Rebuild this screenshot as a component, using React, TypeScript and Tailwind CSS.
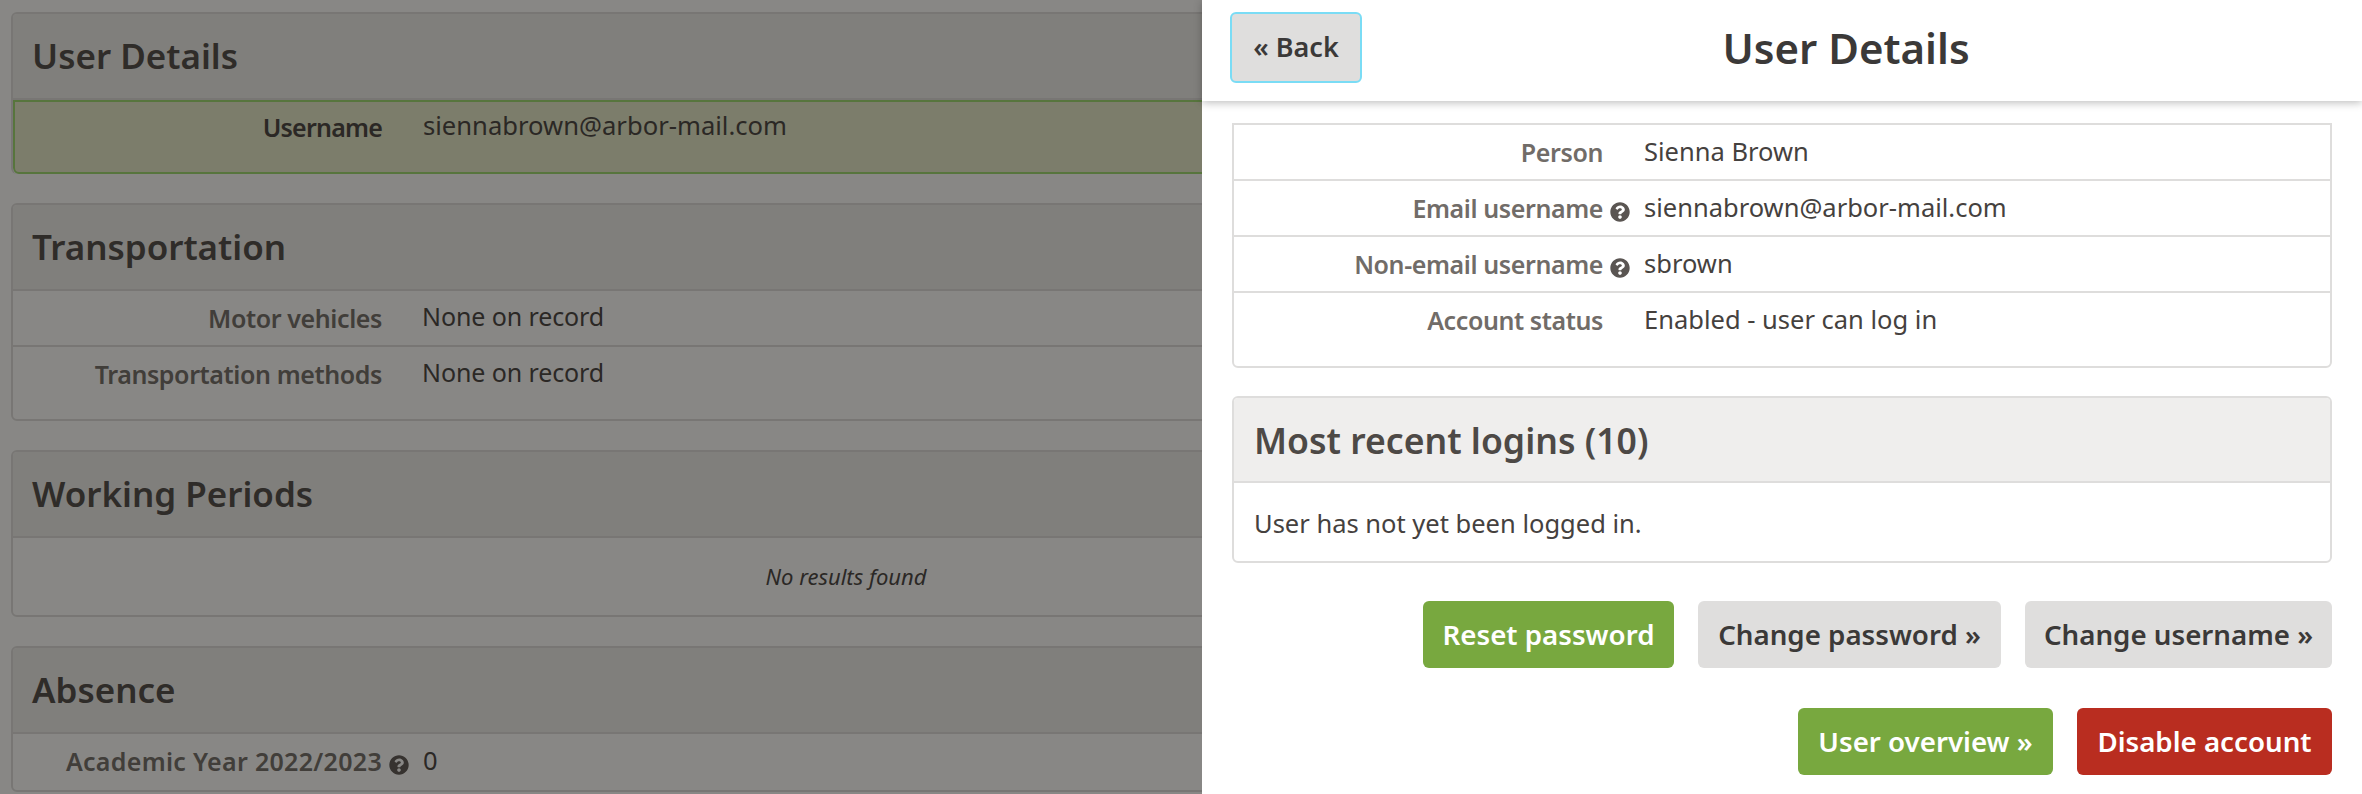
import { FaQuestionCircle } from "react-icons/fa";

const font = "font-['Noto_Sans',sans-serif]";

function Section({ title, children, className = "" }: { title: string; children: React.ReactNode; className?: string }) {
    return (
        <section className={"mb-[29px] overflow-hidden rounded-md border-2 border-[#dedddc] bg-white " + className}>
            <h2 className="flex h-[86px] items-center border-b-2 border-[#dedddc] bg-[#efeeed] px-[19px] text-[35px] font-semibold text-[#4d4946]">
                {title}
            </h2>
            {children}
        </section>
    );
}

function Row({
    label,
    value,
    hint,
    labelClass = "tracking-[-0.4px]",
    valueClass = "text-[25.5px]",
}: {
    label: string;
    value: string;
    hint?: boolean;
    labelClass?: string;
    valueClass?: string;
}) {
    return (
        <div className="flex h-[56px] border-b-2 border-[#dedddc] pt-[9px] text-[25px] last:border-b-0">
            <div className={"flex w-[369px] shrink-0 justify-end font-semibold text-[#716c68] " + labelClass}>
                <span>{label}</span>
                {hint && <FaQuestionCircle className="mt-[12px] ml-[7px] mr-[-27px] h-5 w-5 text-[#5a5552]" />}
            </div>
            <div className={"mt-[-2px] pl-[41px] text-[#45413e] " + valueClass}>{value}</div>
        </div>
    );
}

function Btn({ text, className }: { text: string; className: string }) {
    return (
        <button className={"flex h-[67px] items-center justify-center rounded-md text-[27.7px] font-semibold " + className}>
            {text}
        </button>
    );
}

export default function App() {
    return (
        <div className={"relative h-screen overflow-hidden bg-white " + font}>
            <div className="w-[1692px] px-[11px] pt-3">
                <Section title="User Details" className="border-b-0">
                    <div className="h-[74px] rounded-b-md border-2 border-[#9cda6e] bg-[#e6eaca]">
                        <div className="flex pt-[7px] text-[25px]">
                            <div className="w-[367px] shrink-0 text-right font-semibold tracking-[-0.8px] text-[#45413e]">Username</div>
                            <div className="mt-[-2px] pl-[41px] text-[25.6px] text-[#45413e]">siennabrown@arbor-mail.com</div>
                        </div>
                    </div>
                </Section>
                <Section title="Transportation">
                    <div>
                        <Row label="Motor vehicles" value="None on record" valueClass="ml-[-1px] text-[25px] tracking-[-0.1px]" />
                        <Row label="Transportation methods" value="None on record" valueClass="ml-[-1px] text-[25px] tracking-[-0.1px]" />
                    </div>
                    <div className="h-4" />
                </Section>
                <Section title="Working Periods">
                    <div className="flex h-[77px] items-center justify-center text-[22px] italic text-[#45413e]">No results found</div>
                </Section>
                <Section title="Absence">
                    <Row label="Academic Year 2022/2023" value="0" hint labelClass="tracking-[0.3px]" />
                </Section>
            </div>

            {/* dimmed page behind the slide-over */}
            <div className="absolute inset-0 bg-[#110f0b]/50" />

            <div className="absolute inset-y-0 right-0 w-[1160px] bg-white">
                <div className="flex h-[101px] items-center pb-[6px] pl-[28px] pr-[32px] shadow-[0_2px_8px_rgba(0,0,0,0.25)]">
                    <button className="h-[71px] w-[132px] shrink-0 rounded-md border-2 border-[#7adcf5] bg-[#dfdedd] text-[27px] font-semibold text-[#3b3938]">
                        « Back
                    </button>
                    <h1 className="flex-1 text-center text-[42px] font-semibold text-[#3b3938]">User Details</h1>
                </div>
                <div className="px-[30px] pt-[22px]">
                    <div className="h-[245px] rounded-b-md border-2 border-[#dedddc]">
                        <Row label="Person" value="Sienna Brown" />
                        <Row label="Email username" value="siennabrown@arbor-mail.com" hint />
                        <Row label="Non-email username" value="sbrown" hint />
                        <Row label="Account status" value="Enabled - user can log in" />
                    </div>
                    <div className="mt-[28px] h-[167px] overflow-hidden rounded-md border-2 border-[#dedddc]">
                        <h2 className="flex h-[85px] items-center border-b-2 border-[#dedddc] bg-[#efeeed] pl-5 pt-[2px] text-[35.6px] font-semibold text-[#4d4946]">
                            Most recent logins (10)
                        </h2>
                        <p className="pl-5 pt-[21px] text-[25.5px] text-[#45413e]">User has not yet been logged in.</p>
                    </div>
                    <div className="mt-[38px] flex justify-end gap-6">
                        <Btn text="Reset password" className="w-[251px] bg-[#78a83f] text-white" />
                        <Btn text="Change password »" className="w-[303px] bg-[#dfdedd] text-[#3b3938]" />
                        <Btn text="Change username »" className="w-[307px] bg-[#dfdedd] text-[#3b3938]" />
                    </div>
                    <div className="mt-10 flex justify-end gap-6">
                        <Btn text="User overview »" className="w-[255px] bg-[#78a83f] text-white" />
                        <Btn text="Disable account" className="w-[255px] bg-[#b92d20] text-white" />
                    </div>
                </div>
            </div>
        </div>
    );
}
